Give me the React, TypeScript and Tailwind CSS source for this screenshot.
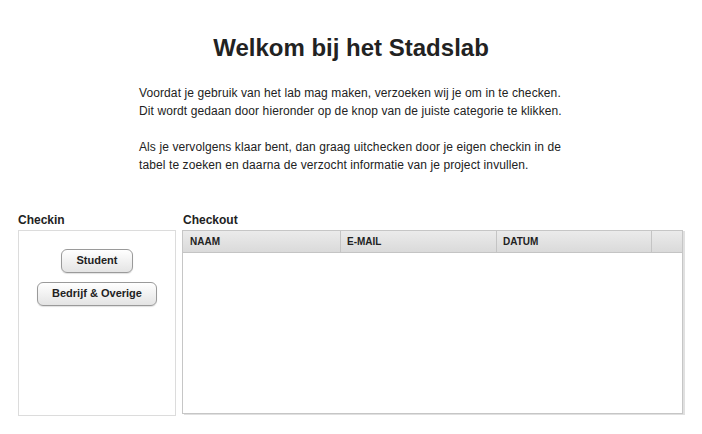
export default function App() {
  return (
    <main className="min-h-screen bg-white font-['Liberation_Sans',Arial,sans-serif] text-[#222]">
      <h1 className="pt-[34px] text-center text-[24px] font-bold leading-[28px]">Welkom bij het Stadslab</h1>

      <div className="mx-auto mt-[22px] w-[424px] whitespace-nowrap text-[12px] leading-[18px] tracking-[0.1px]">
        <p>
          Voordat je gebruik van het lab mag maken, verzoeken wij je om in te checken.
          <br />
          Dit wordt gedaan door hieronder op de knop van de juiste categorie te klikken.
        </p>
        <p className="mt-[18px]">
          Als je vervolgens klaar bent, dan graag uitchecken door je eigen checkin in de
          <br />
          tabel te zoeken en daarna de verzocht informatie van je project invullen.
        </p>
      </div>

      <div className="mt-[39px] flex gap-[6px] pl-[18px]">
        <section className="w-[158px]">
          <h2 className="mb-[3px] text-[12px] font-bold leading-[14px]">Checkin</h2>
          <div className="flex h-[186px] flex-col items-center gap-[9px] border border-[#dcdcdc] pt-[18px]">
            <button
              type="button"
              className="h-[24px] rounded-[6px] border border-[#9a9a9a] bg-gradient-to-b from-white to-[#e4e4e4] px-[15px] pb-px text-[11px] font-bold text-[#222] shadow-[0_1px_1px_rgba(0,0,0,0.12)]"
            >
              Student
            </button>
            <button
              type="button"
              className="h-[24px] w-[120px] rounded-[6px] border border-[#9a9a9a] bg-gradient-to-b from-white to-[#e4e4e4] pb-px text-[11px] font-bold text-[#222] shadow-[0_1px_1px_rgba(0,0,0,0.12)]"
            >
              Bedrijf &amp; Overige
            </button>
          </div>
        </section>

        <section className="w-[501px]">
          <h2 className="mb-[3px] pl-px text-[12px] font-bold leading-[14px]">Checkout</h2>
          <div className="h-[184px] border border-[#c6c6c6] shadow-[2px_1px_0_#e0e0e0]">
            <div className="grid h-[22px] grid-cols-[158px_156px_155px_1fr] border-b border-[#c4c4c4] bg-gradient-to-b from-[#ebebeb] to-[#dadada] text-[10px] font-bold leading-[21px]">
              <div className="border-r border-[#c4c4c4] pl-[7px]">NAAM</div>
              <div className="border-r border-[#c4c4c4] pl-[6px]">E-MAIL</div>
              <div className="border-r border-[#c4c4c4] pl-[6px]">DATUM</div>
              <div />
            </div>
          </div>
        </section>
      </div>
    </main>
  );
}
